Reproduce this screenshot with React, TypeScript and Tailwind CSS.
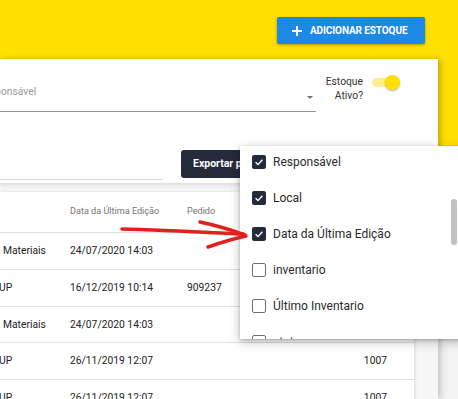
import React from 'react';

const rows = [
    { name: 'Materiais', shift: 'pl-[3px]', date: '24/07/2020 14:03', pedido: '', qty: '' },
    { name: 'UP', shift: '-ml-[1px]', date: '16/12/2019 10:14', pedido: '909237', qty: '' },
    { name: 'Materiais', shift: 'pl-[3px]', date: '24/07/2020 14:03', pedido: '', qty: '' },
    { name: 'UP', shift: '-ml-[1px]', date: '26/11/2019 12:07', pedido: '', qty: '1007' },
    { name: 'UP', shift: '-ml-[1px]', date: '26/11/2019 12:07', pedido: '', qty: '1007' },
];

const columns = [
    { label: 'Responsável', checked: true },
    { label: 'Local', checked: true },
    { label: 'Data da Última Edição', checked: true },
    { label: 'inventario', checked: false },
    { label: 'Último Inventario', checked: false },
    { label: 'status', checked: false },
];

const Checkbox: React.FC<{ checked: boolean }> = ({ checked }) =>
    checked ? (
        <span className="flex h-[14px] w-[14px] items-center justify-center rounded-[2px] bg-[#262b3b]">
            <svg width="14" height="14" viewBox="0 0 14 14">
                <polyline points="3.6,7.3 6,9.6 10.4,4.7" fill="none" stroke="#fff" strokeWidth="1.4" />
            </svg>
        </span>
    ) : (
        <span className="h-[14px] w-[14px] rounded-[2px] border-[1.5px] border-[#6f6f6f] bg-white" />
    );

export default function App() {
    return (
        <div className="relative h-[399px] w-[458px] overflow-hidden bg-[#f3f3f3] font-['Roboto',sans-serif]">
            {/* yellow header */}
            <header className="flex h-[146px] justify-end bg-[#ffe000] pr-[33px] pt-[17px]">
                <button className="flex h-[27px] w-[148px] items-center rounded-[2px] bg-[#1e88e5] pl-[15px] text-white shadow-[0_1px_3px_rgba(0,0,0,0.35)]">
                    <svg width="10" height="10" viewBox="0 0 10 10">
                        <path d="M5 0v10M0 5h10" stroke="#fff" strokeWidth="2" />
                    </svg>
                    <span className="ml-[8px] text-[10px] font-bold tracking-[-0.1px]">ADICIONAR ESTOQUE</span>
                </button>
            </header>

            <main className="-mt-[87px] h-[340px] w-[438px] bg-[#f7f7f7] shadow-[3px_0_6px_rgba(0,0,0,0.18)]">
                {/* filters */}
                <section className="h-[124px] bg-white shadow-[0_2px_5px_rgba(0,0,0,0.12)]">
                    <div className="flex h-[53px]">
                        <div className="flex w-[316px] items-end overflow-hidden border-b border-[#949494] pb-[12px] pr-[3px]">
                            <span className="-ml-[22px] flex-1 text-[10.3px] leading-[14px] text-[#9a9a9a]">Responsável</span>
                            <span className="h-0 w-0 border-x-[3.5px] border-t-[3.5px] border-x-transparent border-t-[#757575]" />
                        </div>
                        <div className="ml-[9px] w-[38px] pt-[16px] text-right text-[10.3px] leading-[14px] text-[#333]">
                            Estoque Ativo?
                        </div>
                        <div className="relative ml-[9px] mt-[16px] h-[15px] w-[28px]">
                            <span className="absolute left-0 top-[3px] h-[9px] w-[26px] rounded-full bg-[#fff08a]" />
                            <span className="absolute left-[13px] top-0 h-[15px] w-[15px] rounded-full bg-[#ffe000] shadow-[0_1px_2px_rgba(0,0,0,0.3)]" />
                        </div>
                    </div>
                    <div className="mt-[38px] flex h-[30px]">
                        <div className="w-[163px] border-b border-[#dadada]" />
                        <button className="ml-[18px] h-[28px] w-[130px] rounded-[3px] bg-[#262b3b] pl-[12px] text-left text-[10.5px] font-bold text-white">
                            Exportar para Excel
                        </button>
                    </div>
                </section>

                {/* table */}
                <section className="mt-[9px] w-[414px] bg-white text-[10.3px] text-[#222] shadow-[0_1px_4px_rgba(0,0,0,0.2)]">
                    <div className="grid h-[41px] grid-cols-[70px_117px_1fr_90px] items-center border-b border-[#e0e0e0] text-[9.1px] text-[#757575]">
                        <span />
                        <span>Data da Última Edição</span>
                        <span>Pedido</span>
                        <span />
                    </div>
                    {rows.map((r, i) => (
                        <div key={i} className="grid h-[36.75px] grid-cols-[70px_117px_1fr_90px] items-center border-b border-[#e0e0e0]">
                            <span className={r.shift}>{r.name}</span>
                            <span>{r.date}</span>
                            <span>{r.pedido}</span>
                            <span className="pr-[27px] text-right">{r.qty}</span>
                        </div>
                    ))}
                </section>
            </main>

            {/* column picker menu */}
            <div className="absolute left-[240px] top-[146px] h-[193px] w-[225px] overflow-hidden bg-white shadow-[0_3px_10px_rgba(0,0,0,0.25),0_1px_3px_rgba(0,0,0,0.2)]">
                <ul className="-mt-[2px]">
                    {columns.map(c => (
                        <li key={c.label} className="flex h-[36px] items-center pl-[12px]">
                            <Checkbox checked={c.checked} />
                            <span className="ml-[7px] text-[12px] text-[#2a2a2a]">{c.label}</span>
                        </li>
                    ))}
                </ul>
                <span className="absolute left-[211px] top-[53px] h-[46px] w-[6px] rounded-full bg-[#c1c1c1]" />
            </div>

            {/* red annotation arrow */}
            <svg className="pointer-events-none absolute left-[115px] top-[215px]" width="140" height="40" viewBox="115 215 140 40">
                <g fill="none" stroke="#e3211c" strokeLinecap="round" strokeLinejoin="round">
                    <path d="M122 229 C160 230 200 232 243 234" strokeWidth="3.5" />
                    <path d="M200 222 Q224 227 245 235" strokeWidth="3.5" />
                    <path d="M208 247 Q228 240 246 236" strokeWidth="3.5" />
                </g>
            </svg>
        </div>
    );
}
